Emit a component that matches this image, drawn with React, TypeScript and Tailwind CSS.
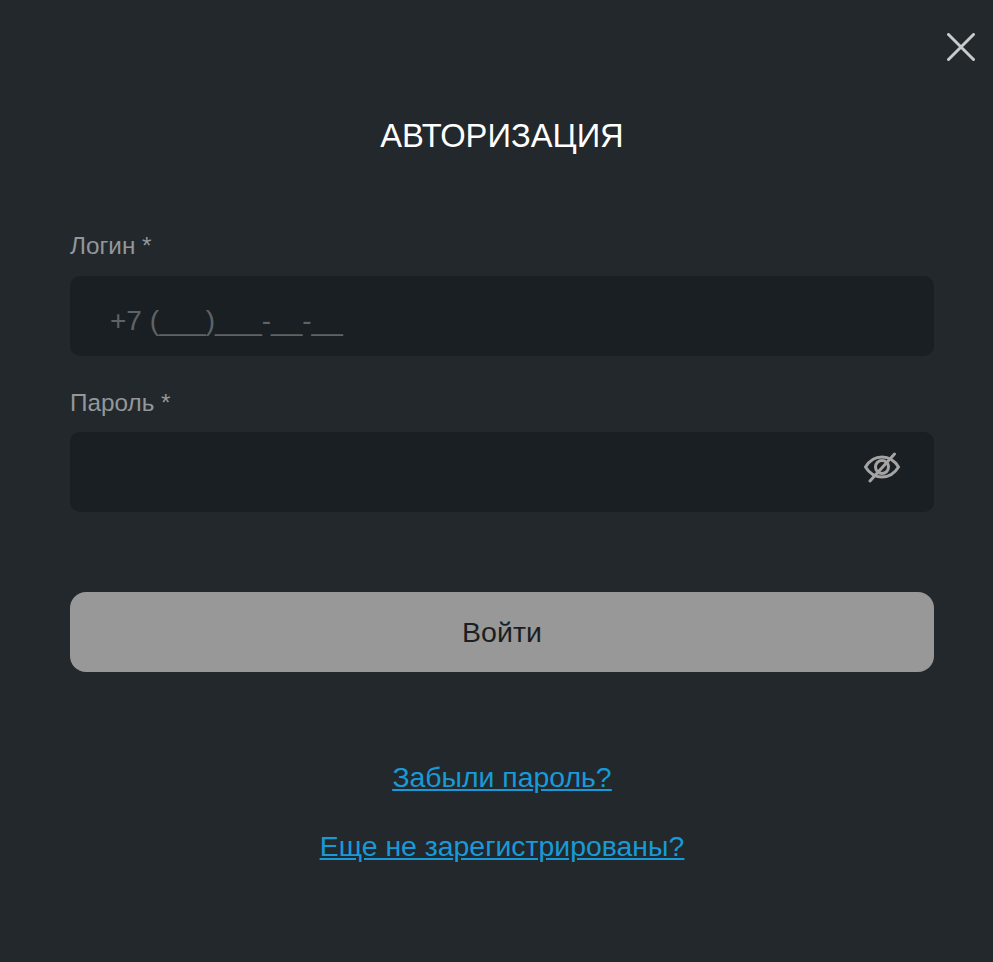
import { useState } from "react";

const font = "font-['Liberation_Sans',Arial,sans-serif]";

function EyeOff() {
    return (
        <svg width="36" height="32" viewBox="0 0 36 32" fill="none" stroke="#a4a4a4" strokeWidth="3" strokeLinecap="round" className="block">
            <path d="M1.500 16C5.500 9.500 11 6 18 6S30.500 9.500 34.500 16C30.500 22.500 25 26 18 26S5.500 22.500 1.500 16Z" />
            <circle cx="18" cy="16" r="6.500" />
            <path d="M30.500 3L6 30" />
        </svg>
    );
}

export default function App() {
    const [login, setLogin] = useState("");
    const [password, setPassword] = useState("");

    return (
        <div className={`relative h-[962px] w-full bg-[#22282c] pl-[70px] pr-[59px] pt-[119px] ${font}`}>
            <button className="absolute right-[18px] top-[33px]">
                <svg width="28" height="28" viewBox="0 0 28 28" stroke="#c8cacc" strokeWidth="3" strokeLinecap="round" className="block">
                    <path d="M1.500 1.500L26.500 26.500M26.500 1.500L1.500 26.500" />
                </svg>
            </button>

            <h1 className="text-center text-[32.700px] leading-[34px] text-white">АВТОРИЗАЦИЯ</h1>

            <label className="mt-[80px] block text-[24.300px] leading-[26px] text-[#93979a]">Логин *</label>
            <input
                value={login}
                onChange={(e) => setLogin(e.target.value)}
                placeholder="+7 (___)___-__-__"
                className="mt-[17px] block h-[80px] w-full rounded-[10px] bg-[#1a1f23] px-[40px] pt-[10px] text-[28px] text-white outline-none placeholder:text-[#5f6366]"
            />

            <label className="mt-[34px] block text-[24.300px] leading-[26px] text-[#93979a]">Пароль *</label>
            <div className="relative mt-[16px]">
                <input
                    type="password"
                    value={password}
                    onChange={(e) => setPassword(e.target.value)}
                    className="block h-[80px] w-full rounded-[10px] bg-[#1a1f23] px-[40px] text-[28px] text-white outline-none"
                />
                <button className="absolute right-[34px] top-[19px]">
                    <EyeOff />
                </button>
            </div>

            <button className="mt-[80px] block h-[80px] w-full rounded-[16px] bg-[#989898] text-[28.500px] text-[#1a1f23]">
                Войти
            </button>

            <div className="mt-[89px] flex flex-col items-center gap-[36px] text-[28.400px] leading-[33px] text-[#189ad8] underline">
                <a href="#">Забыли пароль?</a>
                <a href="#">Еще не зарегистрированы?</a>
            </div>
        </div>
    );
}
